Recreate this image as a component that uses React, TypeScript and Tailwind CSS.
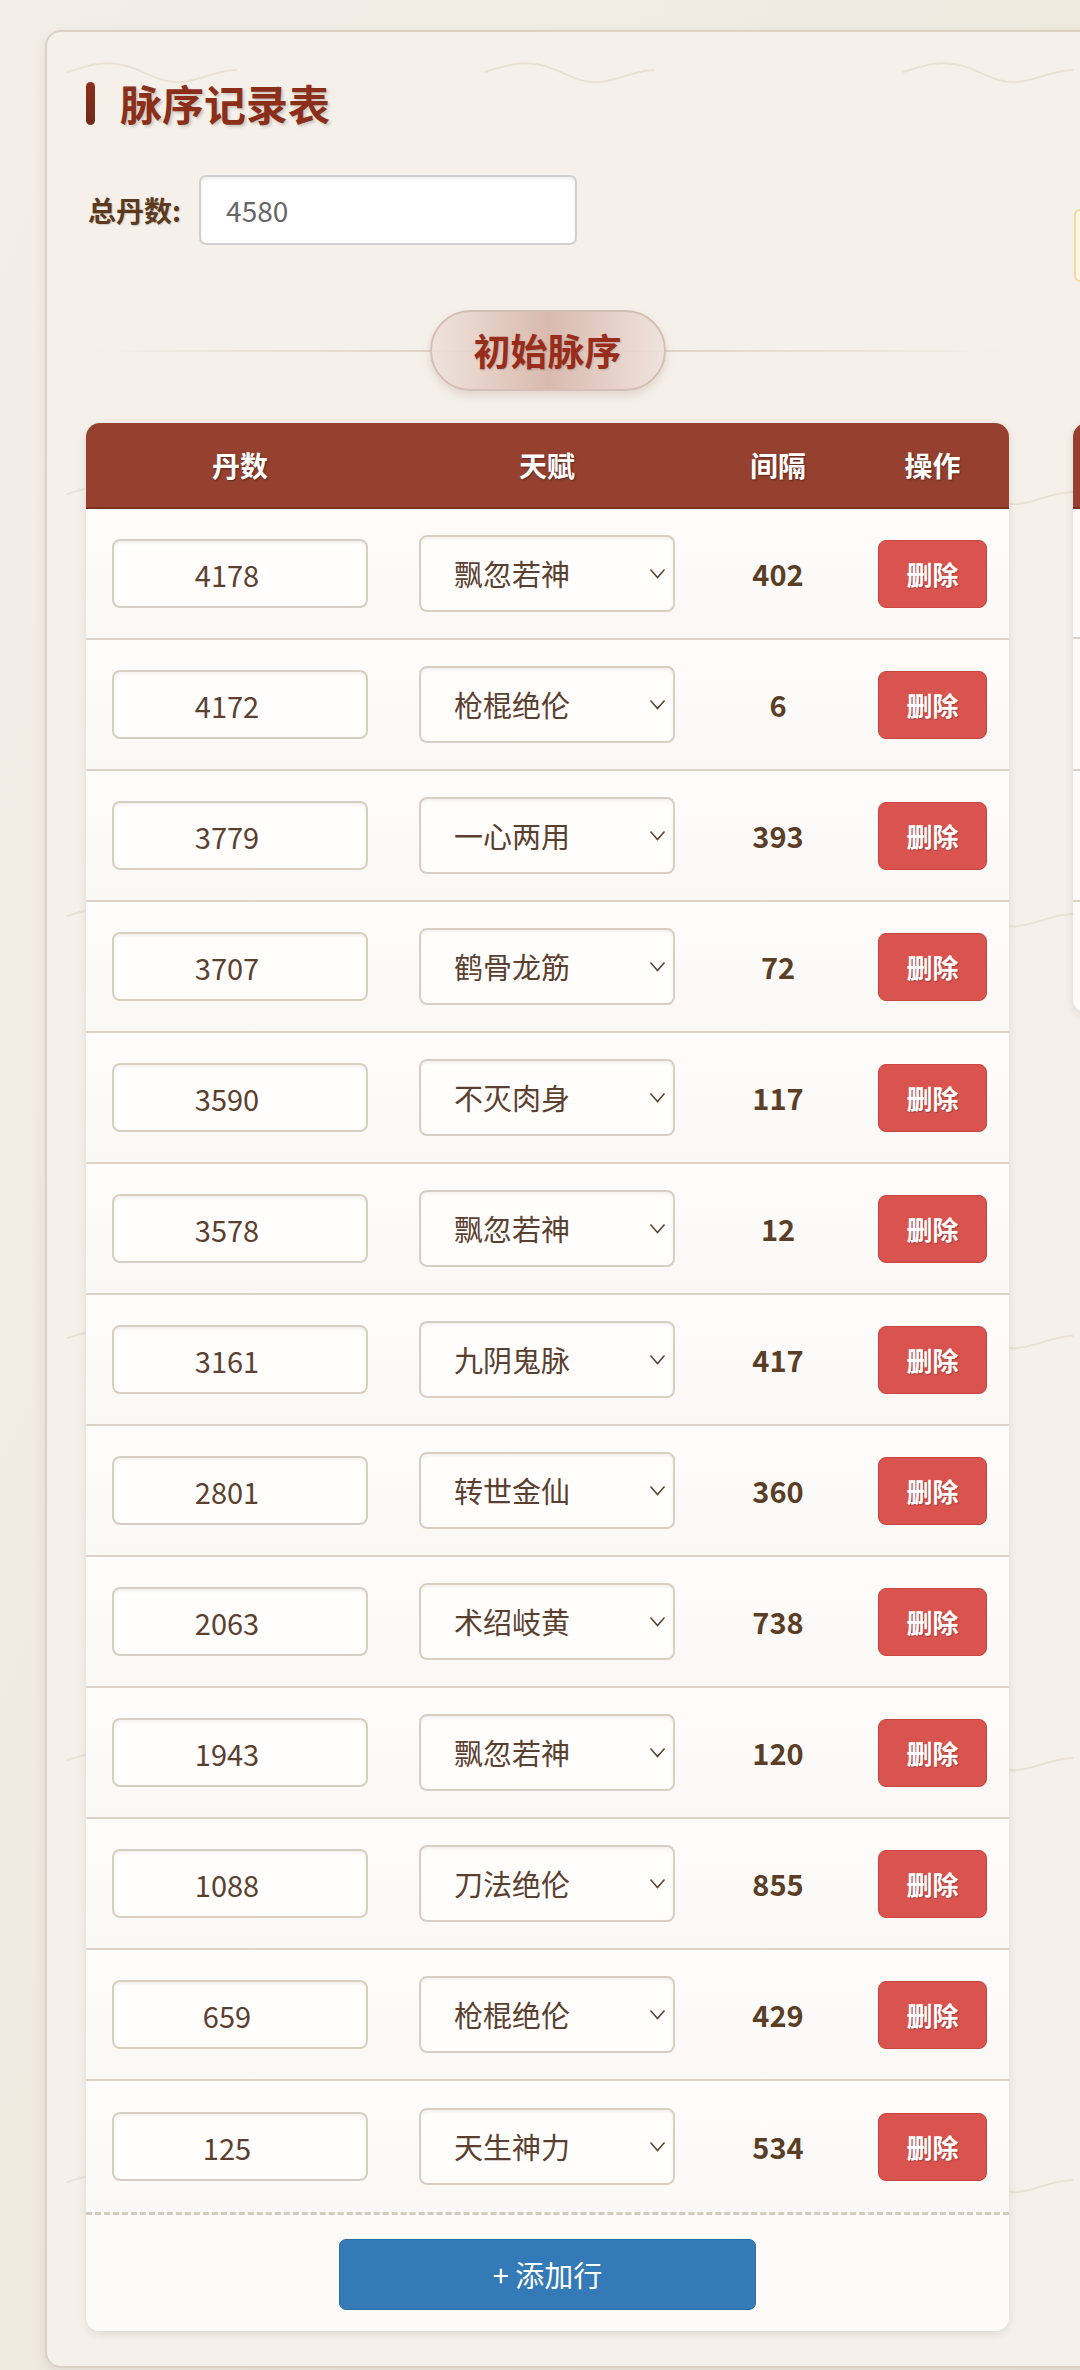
type Row = { dan: number; talent: string; gap: number };

const talents = [
  "飘忽若神",
  "枪棍绝伦",
  "一心两用",
  "鹤骨龙筋",
  "不灭肉身",
  "九阴鬼脉",
  "转世金仙",
  "术绍岐黄",
  "刀法绝伦",
  "天生神力",
];

const rows: Row[] = [
  { dan: 4178, talent: "飘忽若神", gap: 402 },
  { dan: 4172, talent: "枪棍绝伦", gap: 6 },
  { dan: 3779, talent: "一心两用", gap: 393 },
  { dan: 3707, talent: "鹤骨龙筋", gap: 72 },
  { dan: 3590, talent: "不灭肉身", gap: 117 },
  { dan: 3578, talent: "飘忽若神", gap: 12 },
  { dan: 3161, talent: "九阴鬼脉", gap: 417 },
  { dan: 2801, talent: "转世金仙", gap: 360 },
  { dan: 2063, talent: "术绍岐黄", gap: 738 },
  { dan: 1943, talent: "飘忽若神", gap: 120 },
  { dan: 1088, talent: "刀法绝伦", gap: 855 },
  { dan: 659, talent: "枪棍绝伦", gap: 429 },
  { dan: 125, talent: "天生神力", gap: 534 },
];

const cols = "grid grid-cols-[308px_306px_156px_153px] items-center";

function WaveBackground() {
  return (
    <svg className="pointer-events-none absolute inset-0 h-full w-full" aria-hidden="true">
      <defs>
        <pattern id="waves" x="20" y="30" width="418" height="422" patternUnits="userSpaceOnUse">
          <path
            d="M0 10 C 25 2, 40 -2, 60 4 S 95 22, 115 20 S 150 8, 170 8"
            fill="none"
            stroke="#e9e1d5"
            strokeWidth="2"
          />
        </pattern>
      </defs>
      <rect width="100%" height="100%" fill="url(#waves)" />
    </svg>
  );
}

function Chevron() {
  return (
    <svg
      width="17"
      height="11"
      viewBox="0 0 17 11"
      className="pointer-events-none absolute right-[9px] top-[33px]"
      aria-hidden="true"
    >
      <polyline points="1.5,1.5 8.5,9.5 15.5,1.5" fill="none" stroke="#5b4030" strokeWidth="1.5" />
    </svg>
  );
}

function TableRow({ row, last }: { row: Row; last: boolean }) {
  return (
    <div
      className={`${cols} h-[131px] bg-gradient-to-b from-[#fefdfc] to-[#faf8f5] ${
        last ? "" : "border-b-2 border-[#dcd3c8]"
      }`}
    >
      <div className="flex justify-center">
        <input
          defaultValue={row.dan}
          className="h-[69px] w-[256px] rounded-[8px] border-2 border-[#d8cfc3] bg-[#fffefd] pl-[4px] pr-[30px] text-center text-[29px] text-[#5b4030] shadow-[inset_0_2px_3px_rgba(0,0,0,0.06)] outline-none"
        />
      </div>
      <div className="flex justify-center">
        <div className="relative">
          <select
            defaultValue={row.talent}
            className="h-[77px] w-[256px] appearance-none rounded-[8px] border-2 border-[#d8cfc3] bg-[#fffefd] pl-[33px] text-[29px] text-[#5b4030] shadow-[inset_0_2px_3px_rgba(0,0,0,0.06)] outline-none"
          >
            {talents.map((t) => (
              <option key={t}>{t}</option>
            ))}
          </select>
          <Chevron />
        </div>
      </div>
      <div className="text-center text-[29px] font-bold text-[#5a3e25]">{row.gap}</div>
      <div className="flex justify-center">
        <button
          type="button"
          className="h-[68px] w-[109px] rounded-[8px] border border-[#c9443f] bg-[#d9534f] text-[26px] font-bold text-white [text-shadow:1px_1px_1px_rgba(0,0,0,0.25)]"
        >
          删除
        </button>
      </div>
    </div>
  );
}

function TableHeader() {
  return (
    <div
      className={`${cols} h-[86px] border-b-2 border-[#80301f] bg-[#96412f] text-center text-[28px] font-bold text-white [text-shadow:1px_1px_2px_rgba(0,0,0,0.4)]`}
    >
      <div>丹数</div>
      <div>天赋</div>
      <div>间隔</div>
      <div>操作</div>
    </div>
  );
}

export default function App() {
  return (
    <div className="h-[2370px] w-[1080px] overflow-hidden bg-gradient-to-br from-[#f3efe8] to-[#ece5d9] font-['Noto_Sans_CJK_SC','Noto_Sans',sans-serif]">
      <div className="relative ml-[45px] mt-[30px] h-[2338px] w-[1500px] rounded-[16px] border-2 border-[#dbd2c5] bg-[#f5f1ea] shadow-[0_4px_14px_rgba(0,0,0,0.08)]">
        <WaveBackground />
        <div className="relative pl-[39px] pt-[49px]">
          {/* Title */}
          <div className="flex h-[44px] items-center gap-[25px]">
            <div className="h-[43px] w-[9px] rounded-full bg-gradient-to-b from-[#8e2f1b] to-[#6e2a1a]" />
            <h1 className="text-[42px] font-bold leading-[44px] text-[#8b2e1a] [text-shadow:2px_2px_3px_rgba(0,0,0,0.18)]">
              脉序记录表
            </h1>
          </div>

          {/* Total */}
          <div className="mt-[50px] flex h-[70px] items-center gap-[18px]">
            <label className="pl-[2px] text-[28px] font-bold text-[#5c3a1e] [text-shadow:1px_1px_1px_rgba(0,0,0,0.15)]">
              总丹数:
            </label>
            <input
              defaultValue="4580"
              className="h-[70px] w-[378px] rounded-[7px] border-2 border-[#d0d0d0] bg-white pl-[25px] text-[28px] text-[#666] shadow-[inset_0_2px_3px_rgba(0,0,0,0.07)] outline-none"
            />
          </div>

          <div className="mt-[65px] flex items-start gap-[64px]">
            {/* Left column */}
            <div className="w-[923px]">
              <div className="relative flex h-[81px] items-center justify-center">
                <div className="absolute inset-x-0 top-[40px] h-[2px] bg-gradient-to-r from-transparent via-[#d8c9b8] to-transparent" />
                <div className="relative flex h-[81px] w-[236px] items-center justify-center rounded-full border-2 border-[#d3bfb3] bg-gradient-to-r from-[#eee2db]/90 via-[#d6b4a8]/90 to-[#eee2db]/90 shadow-[0_5px_10px_rgba(120,60,40,0.15)]">
                  <span className="text-[37px] font-bold text-[#982d1c] [text-shadow:1px_1px_2px_rgba(0,0,0,0.15)]">
                    初始脉序
                  </span>
                </div>
              </div>

              <div className="mt-[32px] overflow-hidden rounded-[14px] bg-[#fdfbf8] shadow-[0_3px_10px_rgba(0,0,0,0.1)]">
                <TableHeader />
                {rows.map((row, i) => (
                  <TableRow key={i} row={row} last={i === rows.length - 1} />
                ))}
                <div className="flex justify-center border-t-[3px] border-dashed border-[#d3cbc0] bg-[#fdfbf9] pb-[21px] pt-[24px]">
                  <button
                    type="button"
                    className="h-[71px] w-[417px] rounded-[7px] border border-[#2e6da4] bg-[#337ab7] text-[29px] text-white"
                  >
                    + 添加行
                  </button>
                </div>
              </div>
            </div>

            {/* Right column (mostly off-screen) */}
            <div className="relative w-[400px]">
              <div className="absolute left-[1px] top-[-101px] h-[73px] w-[300px] rounded-[6px] border-2 border-[#f2d9a2] bg-[#fdf6e4]" />
              <div className="mt-[113px] overflow-hidden rounded-[14px] bg-[#fdfbf8] shadow-[0_3px_10px_rgba(0,0,0,0.1)]">
                <div className="h-[86px] border-b-2 border-[#80301f] bg-[#96412f]" />
                <div className="h-[130px] border-b-2 border-[#dcd3c8]" />
                <div className="h-[132px] border-b-2 border-[#dcd3c8]" />
                <div className="h-[131px] border-b-2 border-[#dcd3c8]" />
                <div className="h-[111px]" />
              </div>
            </div>
          </div>
        </div>
      </div>
    </div>
  );
}
